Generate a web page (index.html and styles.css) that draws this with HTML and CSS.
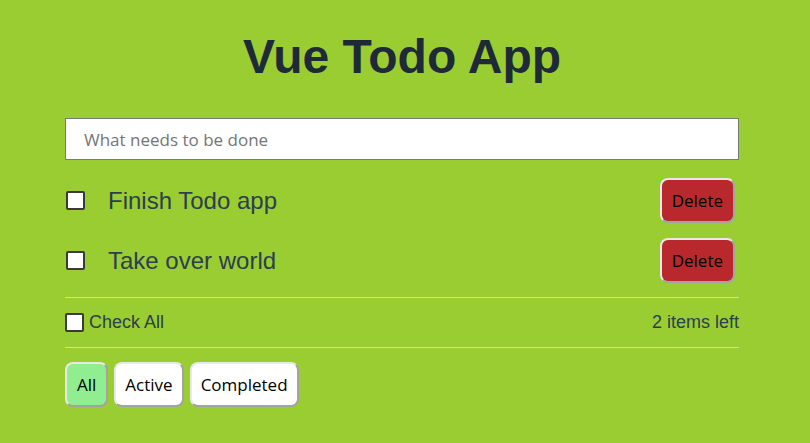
FILE: index.html
```html
<!DOCTYPE html>
<html lang="en">
<head>
<meta charset="utf-8">
<title>Vue Todo App</title>
<link rel="stylesheet" href="styles.css">
</head>
<body>
<div class="app">
  <h1 class="title">Vue Todo App</h1>
  <input class="new-todo" type="text" placeholder="What needs to be done">
  <ul class="todo-list">
    <li class="todo">
      <input class="check" type="checkbox">
      <span class="todo-text">Finish Todo app</span>
      <button class="btn btn-delete">Delete</button>
    </li>
    <li class="todo">
      <input class="check" type="checkbox">
      <span class="todo-text">Take over world</span>
      <button class="btn btn-delete">Delete</button>
    </li>
  </ul>
  <div class="footer-bar">
    <label class="check-all"><input class="check" type="checkbox">Check All</label>
    <span class="count">2 items left</span>
  </div>
  <div class="filters">
    <button class="btn btn-filter is-active">All</button>
    <button class="btn btn-filter">Active</button>
    <button class="btn btn-filter">Completed</button>
  </div>
</div>
</body>
</html>
```

FILE: styles.css
```css
html, body {
  margin: 0;
  padding: 0;
}
body {
  background: #9acd32;
  font-family: "Liberation Sans", Arial, sans-serif;
  color: #2c3e50;
}
.app {
  width: 674px;
  margin-left: 65px;
  padding-top: 29px;
}
.title {
  margin: 0 0 34px;
  font-size: 48px;
  line-height: 55px;
  font-weight: 700;
  text-align: center;
  color: #1f2a38;
}
.new-todo {
  display: block;
  box-sizing: border-box;
  width: 100%;
  height: 42px;
  margin: 0;
  padding: 0 18px;
  border: 1px solid #7a7a7a;
  background: #fff;
  font-family: "Open Sans", sans-serif;
  font-size: 17px;
  color: #222;
  outline: none;
}
.new-todo::placeholder {
  color: #757575;
}
.todo-list {
  list-style: none;
  margin: 18px 0 0;
  padding: 0;
  display: flex;
  flex-direction: column;
  gap: 15px;
}
.todo {
  display: flex;
  align-items: center;
  height: 45px;
}
.check {
  appearance: none;
  -webkit-appearance: none;
  box-sizing: border-box;
  width: 19px;
  height: 19px;
  margin: 0 0 0 1px;
  border: 2px solid #3a3a3a;
  border-radius: 2px;
  background: #fff;
  flex: none;
}
.todo-text {
  margin-left: 23px;
  flex: 1;
  font-size: 24px;
  color: #2c3e50;
}
.btn {
  box-sizing: border-box;
  height: 45px;
  padding: 0 9px;
  border: 2px solid;
  border-color: #e8e8e8 #a3a3a3 #a3a3a3 #e8e8e8;
  border-radius: 8px;
  font-family: "Open Sans", sans-serif;
  font-size: 17px;
  line-height: 19px;
  color: #000;
  background: #fff;
}
.btn-delete {
  background: #b8282c;
  padding: 0 10px;
  margin-right: 4px;
}
.footer-bar {
  margin-top: 14px;
  height: 49px;
  border-top: 1px solid #cfe68f;
  border-bottom: 1px solid #cfe68f;
  display: flex;
  align-items: center;
  justify-content: space-between;
  font-size: 18px;
  color: #2c3e50;
}
.check-all {
  display: flex;
  align-items: center;
  gap: 5px;
}
.check-all .check {
  margin-left: 0;
}
.filters {
  margin-top: 14px;
  display: flex;
  gap: 6px;
}
.btn-filter.is-active {
  background: #90ee90;
  padding: 0 10px;
}
```
